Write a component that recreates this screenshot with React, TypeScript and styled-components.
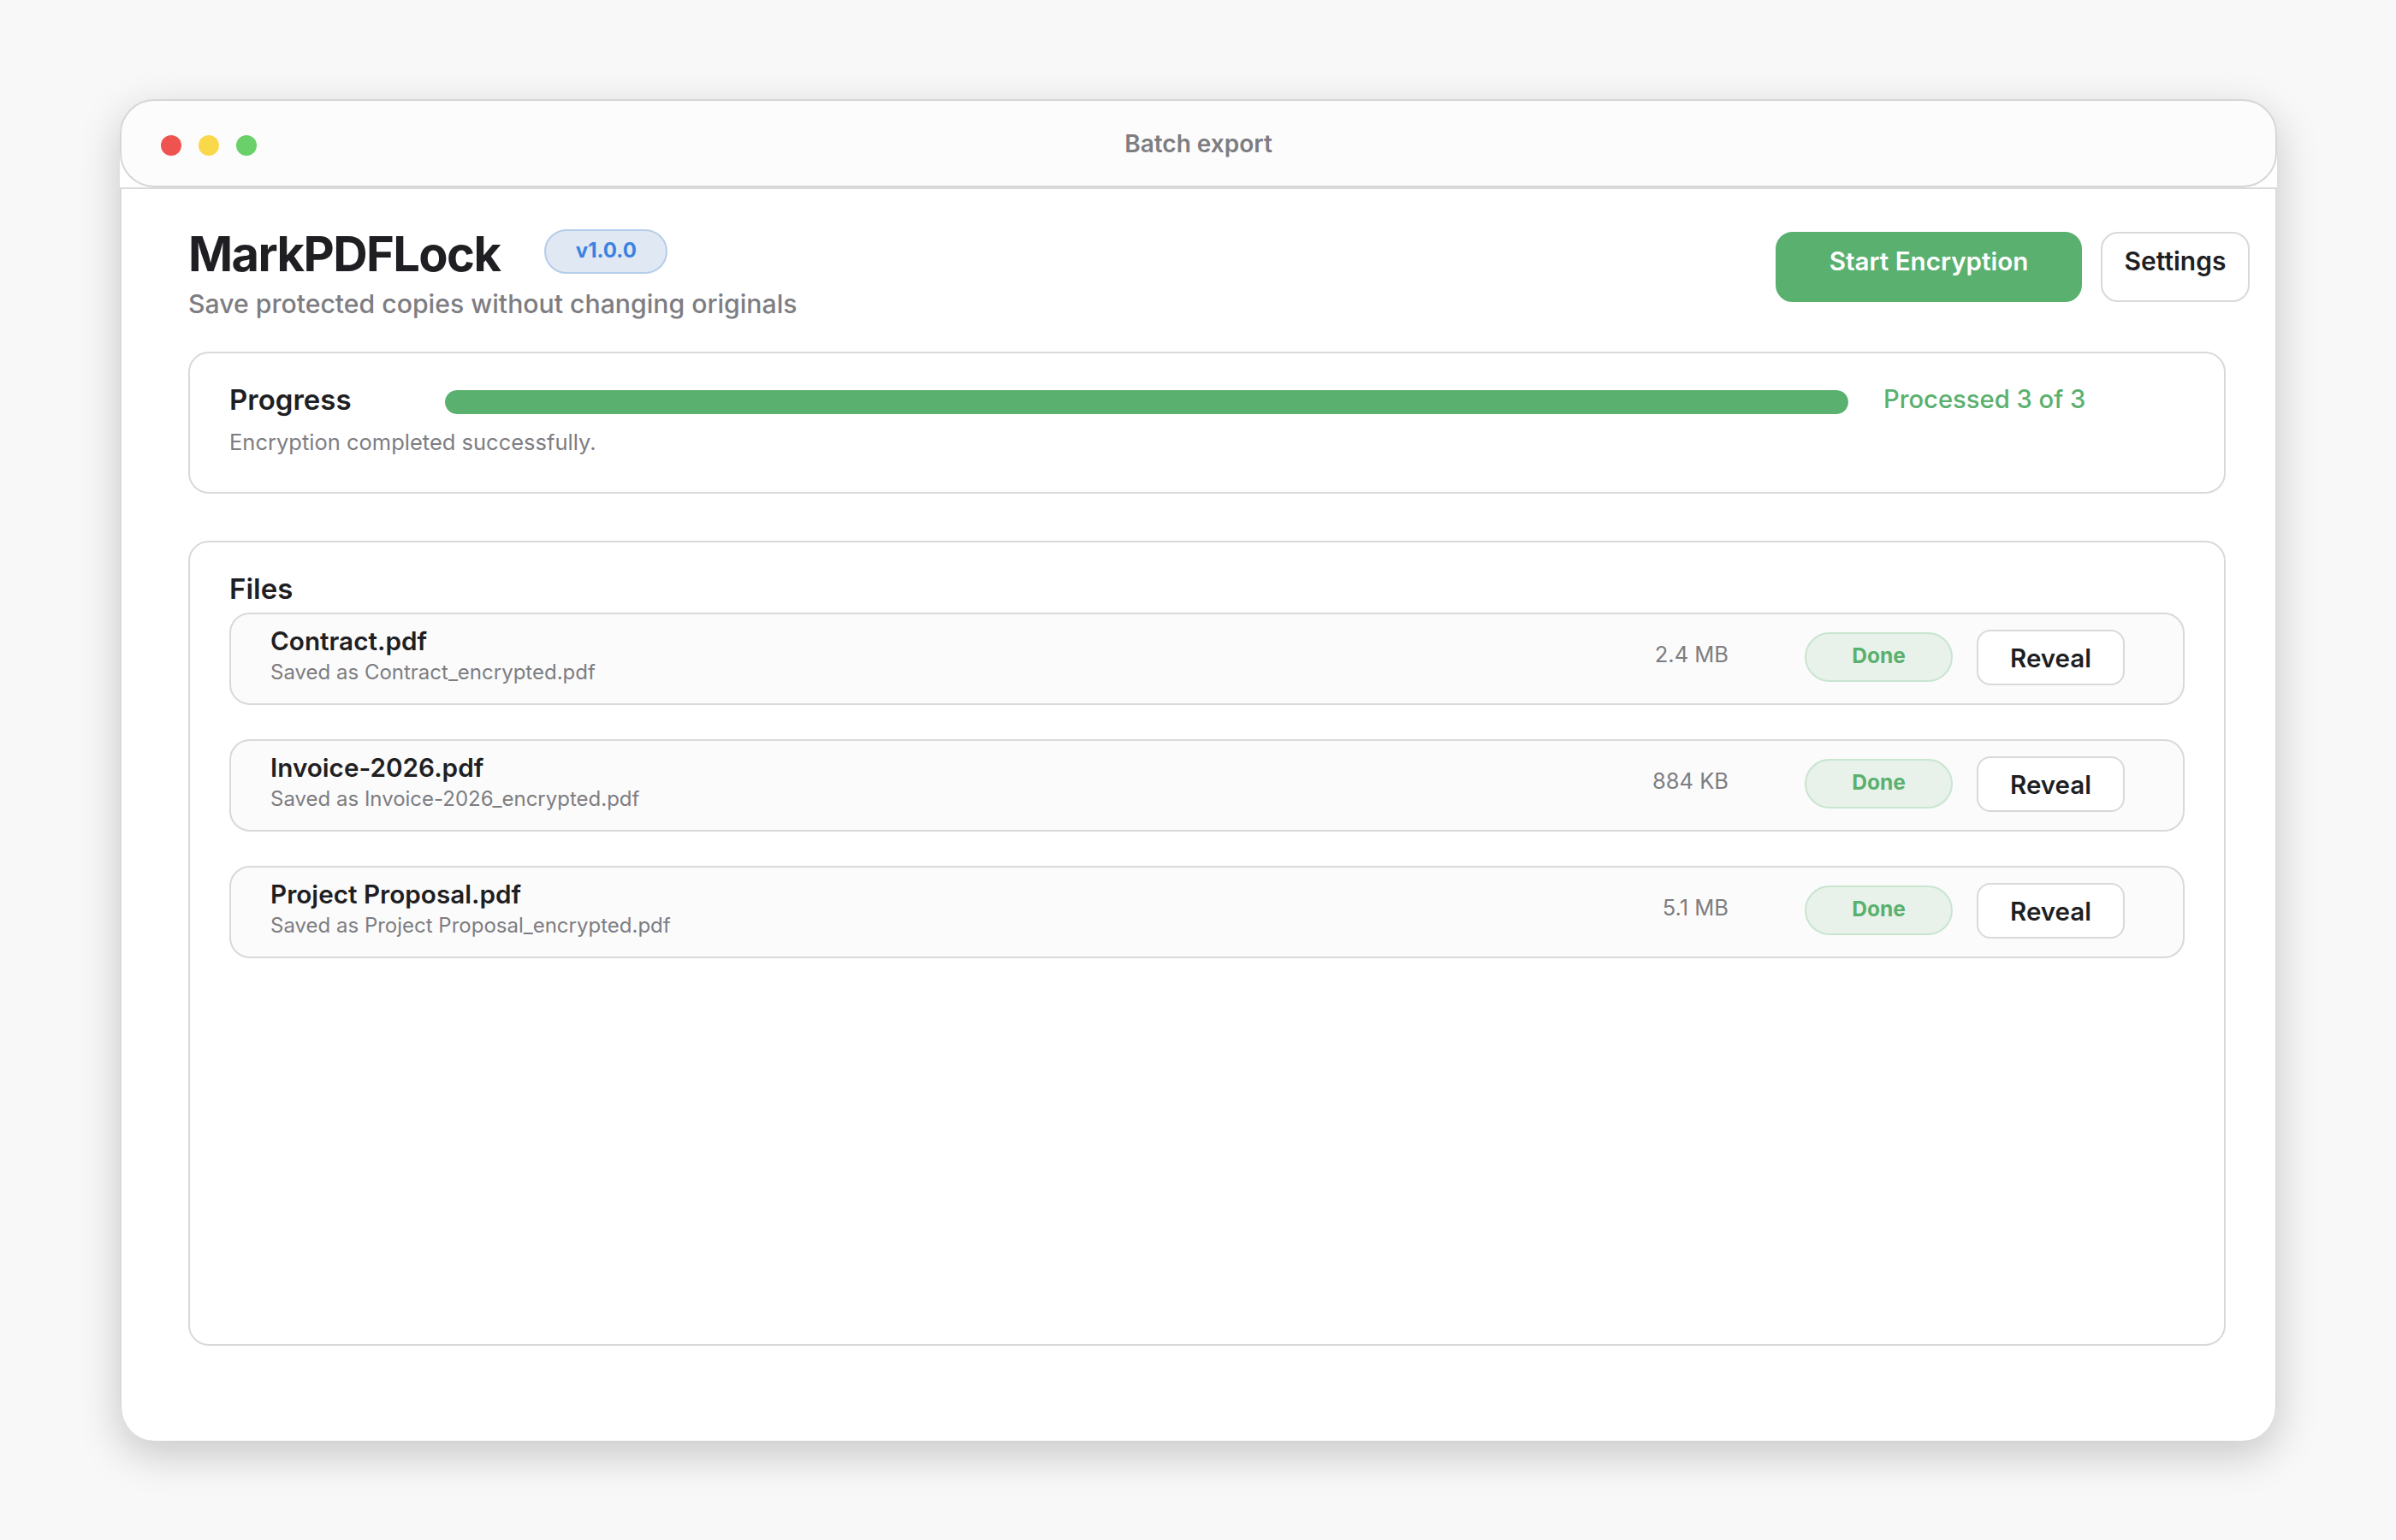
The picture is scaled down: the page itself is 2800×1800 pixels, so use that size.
import React from "react";
import styled, { createGlobalStyle } from "styled-components";

const Global = createGlobalStyle`
  html, body { margin: 0; padding: 0; background: #f8f8f8; }
  body { font-family: Inter, "Noto Sans", "Liberation Sans", sans-serif; -webkit-font-smoothing: antialiased; }
  * { box-sizing: border-box; }
`;

const Page = styled.div`
  width: 2800px;
  height: 1800px;
  padding: 116px 139px 116px 140px;
  background: #f8f8f8;
`;

const Window = styled.div`
  height: 1568px;
  display: flex;
  flex-direction: column;
  border-radius: 40px;
  background: #fff;
  box-shadow: 0 16px 50px rgba(0, 0, 0, 0.2);
`;

const TitleBar = styled.div`
  position: relative;
  height: 103px;
  flex: none;
  display: flex;
  align-items: center;
  padding: 4px 0 0 46px;
  border: 2px solid #d6d6d6;
  border-radius: 40px;
  background: #fcfcfc;
`;

const Dots = styled.div`
  display: flex;
  gap: 20px;
`;

const Dot = styled.span<{ $color: string }>`
  width: 24px;
  height: 24px;
  border-radius: 50%;
  background: ${(p) => p.$color};
`;

const WindowTitle = styled.div`
  position: absolute;
  left: 0;
  right: 0;
  top: 30px;
  text-align: center;
  font-size: 28px;
  line-height: 40px;
  font-weight: 600;
  color: #7d7d82;
`;

const Body = styled.div`
  flex: 1;
  display: flex;
  flex-direction: column;
  padding: 47px 58px 0 78px;
  border: 2px solid #dadada;
  border-bottom: none;
  border-radius: 0 0 40px 40px;
`;

const Header = styled.header`
  display: flex;
  justify-content: space-between;
  align-items: flex-start;
  margin: 0 -28px 36px 0;
`;

const Brand = styled.div`
  display: flex;
  flex-direction: column;
`;

const TitleRow = styled.div`
  display: flex;
  align-items: center;
  gap: 52px;
  height: 52px;
`;

const AppName = styled.h1`
  margin: 0;
  padding-top: 5px;
  font-size: 56px;
  line-height: 52px;
  font-weight: 700;
  letter-spacing: -1.6px;
  color: #1f1f23;
`;

const Badge = styled.span`
  width: 144px;
  height: 52px;
  padding-bottom: 4px;
  display: flex;
  align-items: center;
  justify-content: center;
  border: 2px solid #b5cde9;
  border-radius: 26px;
  background: #e0e8f3;
  color: #3b82e0;
  font-size: 24px;
  font-weight: 700;
`;

const Subtitle = styled.p`
  margin: 15px 0 0;
  font-size: 30.2px;
  line-height: 40px;
  font-weight: 500;
  color: #7d7d82;
`;

const Actions = styled.div`
  display: flex;
  gap: 22px;
  margin-top: 3px;
`;

const Button = styled.button`
  height: 82px;
  padding: 0 0 14px;
  border-radius: 20px;
  font-family: inherit;
  font-weight: 600;
  cursor: pointer;
`;

const PrimaryButton = styled(Button)`
  width: 358px;
  border: 2px solid #5ab06e;
  background: #5ab06e;
  color: #fff;
  font-size: 29.6px;
`;

const SecondaryButton = styled(Button)`
  width: 174px;
  border: 2px solid #d9d9d9;
  background: #fff;
  color: #1f1f23;
  font-size: 30px;
`;

const Panel = styled.section`
  border: 2px solid #d9d9d9;
  border-radius: 24px;
  background: #fff;
`;

const ProgressPanel = styled(Panel)`
  height: 166px;
  padding: 41px 46px 0;
  margin-bottom: 55px;
`;

const ProgressRow = styled.div`
  display: flex;
  align-items: center;
  height: 32px;
`;

const SectionTitle = styled.h2`
  margin: 0;
  font-size: 33px;
  line-height: 40px;
  font-weight: 600;
  color: #1f1f23;
`;

const ProgressLabel = styled(SectionTitle)`
  width: 252px;
  flex: none;
  margin-bottom: 6px;
`;

const Track = styled.div`
  width: 1640px;
  height: 28px;
  flex: none;
  border-radius: 14px;
  background: #e6e6e6;
  overflow: hidden;
`;

const Fill = styled.div`
  height: 100%;
  border-radius: 14px;
  background: #5ab06e;
`;

const ProcessedCount = styled.span`
  margin: 0 0 6px 41px;
  font-size: 29.2px;
  line-height: 40px;
  font-weight: 500;
  color: #5ab06e;
  white-space: nowrap;
`;

const StatusText = styled.p`
  margin: 11px 0 0;
  font-size: 25.5px;
  line-height: 40px;
  color: #7d7d82;
`;

const FilesPanel = styled(Panel)`
  flex: none;
  height: 941px;
  padding: 34px 46px 0;
`;

const FileList = styled.div`
  display: flex;
  flex-direction: column;
  gap: 40px;
  margin-top: 8px;
`;

const FileRow = styled.div`
  height: 108px;
  display: flex;
  align-items: center;
  padding: 0 68px 0 46px;
  border: 2px solid #d9d9d9;
  border-radius: 24px;
  background: #fbfbfb;
`;

const FileInfo = styled.div`
  flex: 1;
  min-width: 0;
  display: flex;
  flex-direction: column;
  padding-bottom: 8px;
`;

const FileName = styled.div`
  font-size: 29.7px;
  line-height: 38px;
  font-weight: 600;
  color: #1f1f23;
`;

const SavedAs = styled.div`
  margin-top: 2px;
  font-size: 24px;
  line-height: 32px;
  color: #7d7d82;
`;

const FileSize = styled.div`
  margin: 0 89px 11px 0;
  font-size: 25.5px;
  line-height: 36px;
  color: #7d7d82;
`;

const StatusPill = styled.span`
  width: 173px;
  height: 58px;
  margin-bottom: 4px;
  padding-bottom: 4px;
  display: flex;
  align-items: center;
  justify-content: center;
  border: 2px solid #c9e5d0;
  border-radius: 29px;
  background: #e8f2ea;
  color: #5ab06e;
  font-size: 24.5px;
  font-weight: 700;
`;

const RevealButton = styled.button`
  width: 173px;
  height: 65px;
  margin: 0 0 4px 28px;
  padding: 2px 0 0;
  border: 2px solid #d9d9d9;
  border-radius: 16px;
  background: #fff;
  color: #1f1f23;
  font-family: inherit;
  font-size: 29.5px;
  font-weight: 600;
  cursor: pointer;
`;

const files = [
  { name: "Contract.pdf", saved: "Saved as Contract_encrypted.pdf", size: "2.4 MB" },
  { name: "Invoice-2026.pdf", saved: "Saved as Invoice-2026_encrypted.pdf", size: "884 KB" },
  { name: "Project Proposal.pdf", saved: "Saved as Project Proposal_encrypted.pdf", size: "5.1 MB" },
];

export default function App() {
  return (
    <Page>
      <Global />
      <Window>
        <TitleBar>
          <Dots>
            <Dot $color="#ef5350" />
            <Dot $color="#f9d84a" />
            <Dot $color="#6ad16a" />
          </Dots>
          <WindowTitle>Batch export</WindowTitle>
        </TitleBar>
        <Body>
          <Header>
            <Brand>
              <TitleRow>
                <AppName>MarkPDFLock</AppName>
                <Badge>v1.0.0</Badge>
              </TitleRow>
              <Subtitle>Save protected copies without changing originals</Subtitle>
            </Brand>
            <Actions>
              <PrimaryButton>Start Encryption</PrimaryButton>
              <SecondaryButton>Settings</SecondaryButton>
            </Actions>
          </Header>
          <ProgressPanel>
            <ProgressRow>
              <ProgressLabel>Progress</ProgressLabel>
              <Track>
                <Fill style={{ width: "100%" }} />
              </Track>
              <ProcessedCount>Processed 3 of 3</ProcessedCount>
            </ProgressRow>
            <StatusText>Encryption completed successfully.</StatusText>
          </ProgressPanel>
          <FilesPanel>
            <SectionTitle>Files</SectionTitle>
            <FileList>
              {files.map((f) => (
                <FileRow key={f.name}>
                  <FileInfo>
                    <FileName>{f.name}</FileName>
                    <SavedAs>{f.saved}</SavedAs>
                  </FileInfo>
                  <FileSize>{f.size}</FileSize>
                  <StatusPill>Done</StatusPill>
                  <RevealButton>Reveal</RevealButton>
                </FileRow>
              ))}
            </FileList>
          </FilesPanel>
        </Body>
      </Window>
    </Page>
  );
}
